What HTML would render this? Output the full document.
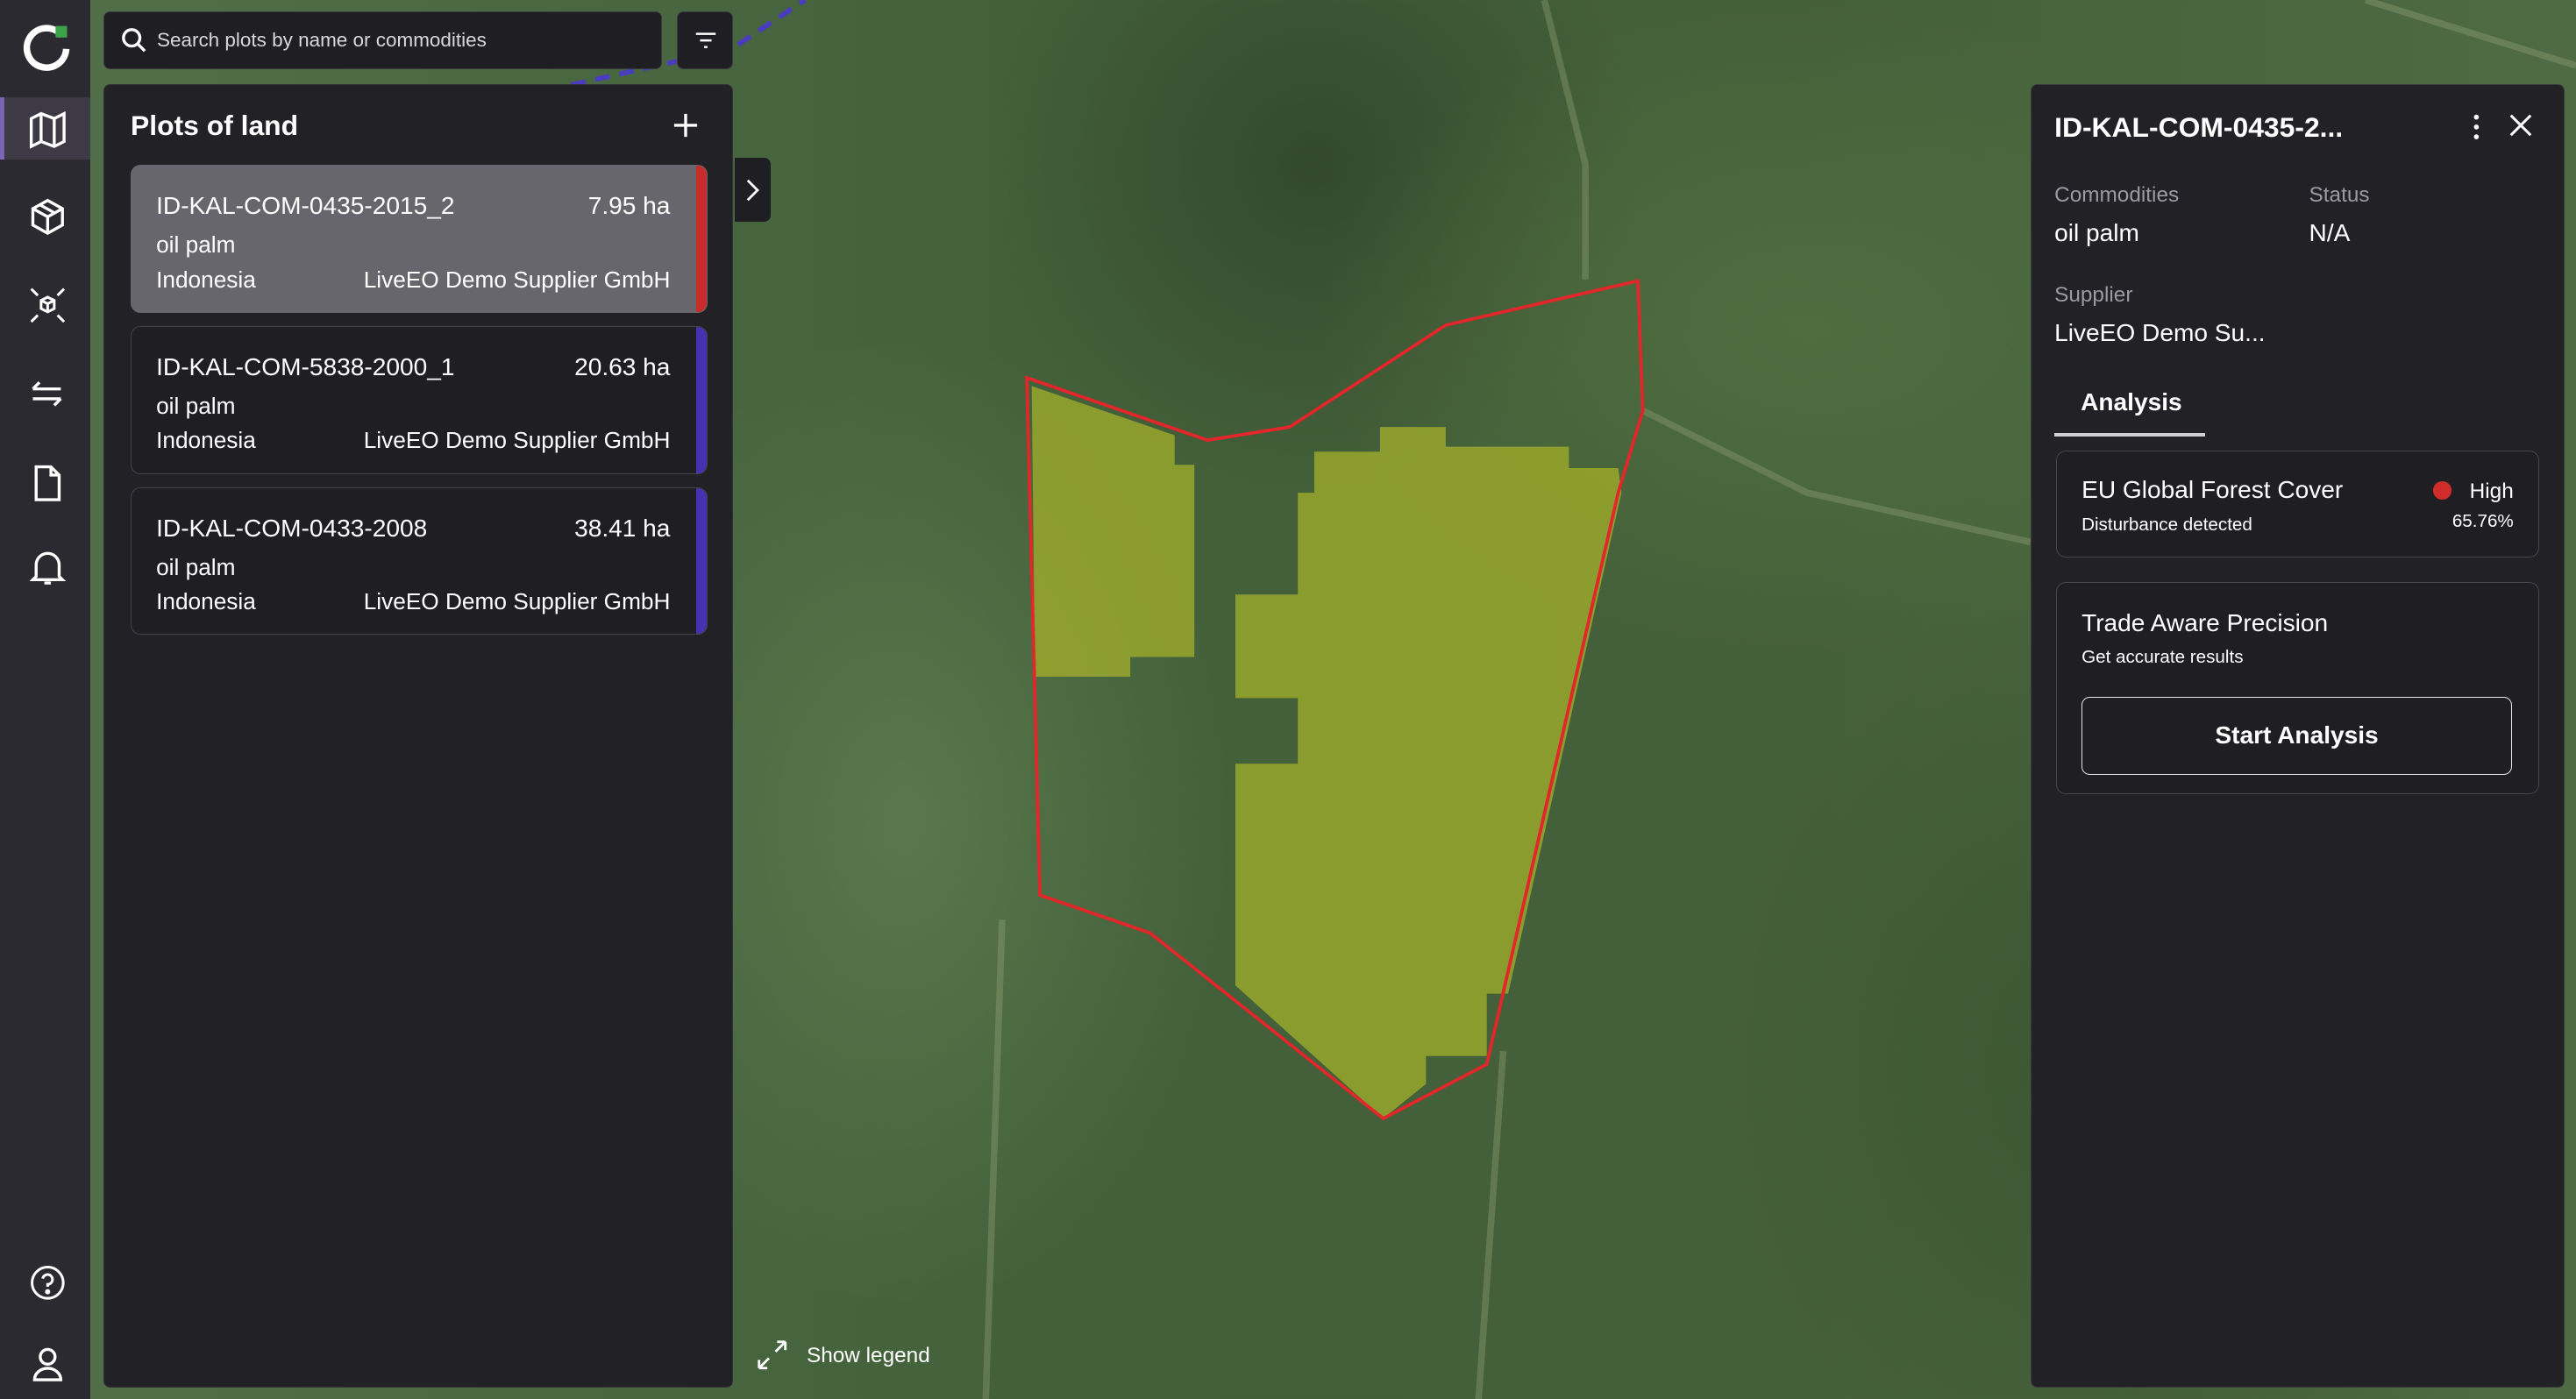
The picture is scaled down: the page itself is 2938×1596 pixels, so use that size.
<!DOCTYPE html>
<html><head><meta charset="utf-8"><style>
*{box-sizing:border-box;margin:0;padding:0}
html,body{width:2938px;height:1596px;overflow:hidden;background:#3b4f35}
#root{zoom:1.8737;width:1568px;height:852px;position:relative;font-family:"Liberation Sans",sans-serif;color:#fff;overflow:hidden}
.map{position:absolute;inset:0;background:
radial-gradient(ellipse 300px 200px at 1100px 200px,#4f6e3f,transparent),
radial-gradient(ellipse 250px 300px at 1300px 650px,#3a5531,transparent),
radial-gradient(ellipse 200px 300px at 550px 500px,#5a784c,transparent),
radial-gradient(ellipse 200px 200px at 800px 100px,#34492c,transparent),
linear-gradient(90deg,#52704a,#42603a 40%,#44603a 70%,#4e6b44);}
.side{position:absolute;left:0;top:0;width:55px;height:852px;background:#2c2a31}
.side .act{position:absolute;left:0;top:59px;width:55px;height:38px;background:#3d3a45;border-left:3px solid #7b63b5}
.ic{position:absolute;left:16px;width:26px;height:26px}
.search{position:absolute;left:63px;top:7px;width:340px;height:35px;background:#1f1e23;border:1px solid #3a3940;border-radius:4px;font-size:12px;color:#d8d8dc;padding:10px 0 0 32px}
.filter{position:absolute;left:412px;top:7px;width:34px;height:35px;background:#1f1e23;border:1px solid #3a3940;border-radius:4px}
.panel{position:absolute;left:63px;top:51px;width:383px;height:794px;background:#222126;border:1px solid #333238;border-radius:4px}
.panel h2{position:absolute;left:16px;top:15px;font-size:17px;font-weight:bold}
.card{position:absolute;left:16px;width:351px;height:90px;border:1px solid #45444b;border-radius:6px;background:#1f1e23;overflow:hidden;font-size:14px}
.card.sel{background:#68666d;border-color:#68666d}
.card .bar{position:absolute;right:0;top:0;bottom:0;width:6px;background:#4632b0}
.card.sel .bar{background:#c82c2a}
.card .r{position:absolute;left:15px;right:22px;display:flex;justify-content:space-between}
.tog{position:absolute;left:447px;top:96px;width:22px;height:39px;background:#1f1e23;border-radius:0 4px 4px 0}
.rp{position:absolute;left:1236px;top:51px;width:325px;height:794px;background:#222126;border:1px solid #3a3940;border-radius:4px}
.lbl{position:absolute;font-size:13px;color:#9c9aa1}
.val{position:absolute;font-size:15px}
.box{position:absolute;left:15px;width:294px;border:1px solid #47464c;border-radius:6px;background:#1f1e23}
</style></head><body><div id="root">
<div class="map"></div>
<svg style="position:absolute;left:0;top:0" width="1568" height="852">
<path d="M300 95 L310 60 L400 40 L445 30 L490 0" stroke="#4a3cc0" stroke-width="3" fill="none" stroke-dasharray="9 6"/>
<path d="M940 0 L965 100 L965 170 M1000 250 L1100 300 L1236 330 M610 560 L600 852 M915 640 L900 852 M1440 0 L1568 40" stroke="#9aa77e" stroke-width="4" fill="none" opacity=".35"/>
<path d="M628 235 L715 265 L715 283 L727 283 L727 400 L688 400 L688 412 L630 412 Z" fill="#a8b32a" opacity=".72"/>
<path d="M800 275 L840 275 L840 260 L880 260 L880 272 L955 272 L955 285 L985 285 L987 300 L918 605 L905 605 L905 643 L868 643 L868 660 L842 681 L752 600 L752 465 L790 465 L790 425 L752 425 L752 362 L790 362 L790 300 L800 300 Z" fill="#a8b32a" opacity=".72"/>
<path d="M625 230 L735 268 L785 260 L880 198 L997 171 L1000 250 L985 300 L905 648 L842 681 L700 568 L633 545 Z" fill="none" stroke="#e2262a" stroke-width="2"/>
</svg>
<div class="side"><div class="act"></div>
<svg class="ic" style="top:13px;width:32px;height:32px;left:13px" viewBox="0 0 32 32"><path d="M25 9 A12 12 0 1 0 27.5 17" stroke="#fff" stroke-width="4" fill="none"/><rect x="21" y="3" width="7" height="7" fill="#3ca34a"/></svg>
<svg class="ic" style="top:66px" viewBox="0 0 26 26" fill="none" stroke="#fff" stroke-width="1.8"><path d="M3 6 L9 3 L17 6 L23 3 V20 L17 23 L9 20 L3 23 Z M9 3V20 M17 6V23"/></svg>
<svg class="ic" style="top:119px" viewBox="0 0 26 26" fill="none" stroke="#fff" stroke-width="1.8"><path d="M13 3 L22 8 V18 L13 23 L4 18 V8 Z M4 8 L13 13 L22 8 M13 13 V23 M8 5.5 L17 10.5"/></svg>
<svg class="ic" style="top:173px" viewBox="0 0 26 26" fill="none" stroke="#fff" stroke-width="1.6"><path d="M13 8 L17 10 V15 L13 17 L9 15 V10 Z M9 10 L13 12 L17 10 M13 12V17 M3 3 L7 7 M23 3 L19 7 M3 23 L7 19 M23 23 L19 19"/></svg>
<svg class="ic" style="top:227px" viewBox="0 0 26 26" fill="none" stroke="#fff" stroke-width="1.8"><path d="M4 10 H21 M4 10 L8 6 M4 16 H21 M21 16 L17 20"/></svg>
<svg class="ic" style="top:281px" viewBox="0 0 26 26" fill="none" stroke="#fff" stroke-width="1.8"><path d="M6 3 H15 L20 8 V23 H6 Z M15 3 V8 H20"/></svg>
<svg class="ic" style="top:332px" viewBox="0 0 26 26" fill="none" stroke="#fff" stroke-width="1.8"><path d="M6 19 V12 A7 7 0 0 1 20 12 V19 L22 21 H4 Z M11 23 H15"/></svg>
<svg class="ic" style="top:768px" viewBox="0 0 26 26" fill="none" stroke="#fff" stroke-width="1.6"><circle cx="13" cy="13" r="9.5"/><path d="M10 10.5 A3 3 0 1 1 13 14 V15.5"/><circle cx="13" cy="18.5" r=".8" fill="#fff"/></svg>
<svg class="ic" style="top:817px" viewBox="0 0 26 26" fill="none" stroke="#fff" stroke-width="1.8"><circle cx="13" cy="9" r="4.5"/><path d="M5 23 A8 7 0 0 1 21 23 Z"/></svg>
</div>
<div class="search">Search plots by name or commodities
<svg style="position:absolute;left:10px;top:9px" width="16" height="16" viewBox="0 0 16 16" fill="none" stroke="#fff" stroke-width="1.8"><circle cx="6.5" cy="6.5" r="5"/><path d="M10 10 L14.5 14.5"/></svg></div>
<div class="filter"><svg style="position:absolute;left:9px;top:10px" width="16" height="14" viewBox="0 0 16 14" stroke="#fff" stroke-width="1.3"><path d="M2 3H14M4.5 7H11.5M7 11H9"/></svg></div>
<div class="panel"><h2>Plots of land</h2>
<svg style="position:absolute;left:346px;top:17px" width="16" height="16" stroke="#fff" stroke-width="1.8"><path d="M8 1V15M1 8H15"/></svg>
<div class="card sel" style="top:49px"><div class="bar"></div>
<div class="r" style="top:16px;font-size:15px"><span>ID-KAL-COM-0435-2015_2</span><span>7.95 ha</span></div>
<div class="r" style="top:40px"><span>oil palm</span></div>
<div class="r" style="top:61px"><span>Indonesia</span><span>LiveEO Demo Supplier GmbH</span></div></div>
<div class="card" style="top:147px"><div class="bar"></div>
<div class="r" style="top:16px;font-size:15px"><span>ID-KAL-COM-5838-2000_1</span><span>20.63 ha</span></div>
<div class="r" style="top:40px"><span>oil palm</span></div>
<div class="r" style="top:61px"><span>Indonesia</span><span>LiveEO Demo Supplier GmbH</span></div></div>
<div class="card" style="top:245px"><div class="bar"></div>
<div class="r" style="top:16px;font-size:15px"><span>ID-KAL-COM-0433-2008</span><span>38.41 ha</span></div>
<div class="r" style="top:40px"><span>oil palm</span></div>
<div class="r" style="top:61px"><span>Indonesia</span><span>LiveEO Demo Supplier GmbH</span></div></div>
</div>
<div class="tog"><svg style="position:absolute;left:6px;top:12px" width="10" height="16" fill="none" stroke="#fff" stroke-width="1.5"><path d="M2 2L8 8L2 14"/></svg></div>
<svg style="position:absolute;left:460px;top:815px" width="20" height="20" fill="none" stroke="#fff" stroke-width="1.5"><path d="M2 18L8 12M2 18V13M2 18H7M18 2L12 8M18 2V7M18 2H13"/></svg>
<div style="position:absolute;left:491px;top:818px;font-size:13px">Show legend</div>
<div style="position:absolute;left:1478px;top:826px;font-size:14px;color:rgba(255,255,255,.25);font-weight:bold">⊘ mapbox</div>
<div class="rp">
<div style="position:absolute;left:14px;top:16px;font-size:17px;font-weight:bold">ID-KAL-COM-0435-2...</div>
<svg style="position:absolute;left:266px;top:17px" width="10" height="18" fill="#fff"><circle cx="5" cy="3" r="1.5"/><circle cx="5" cy="9" r="1.5"/><circle cx="5" cy="15" r="1.5"/></svg>
<svg style="position:absolute;left:290px;top:17px" width="16" height="16" stroke="#fff" stroke-width="1.6"><path d="M2 2L14 14M14 2L2 14"/></svg>
<div class="lbl" style="left:14px;top:60px">Commodities</div><div class="val" style="left:14px;top:82px">oil palm</div>
<div class="lbl" style="left:169px;top:60px">Status</div><div class="val" style="left:169px;top:82px">N/A</div>
<div class="lbl" style="left:14px;top:121px">Supplier</div><div class="val" style="left:14px;top:143px">LiveEO Demo Su...</div>
<div style="position:absolute;left:30px;top:185px;font-size:15px;font-weight:bold">Analysis</div>
<div style="position:absolute;left:14px;top:212px;width:92px;height:2px;background:#cfcfd4"></div>
<div class="box" style="top:223px;height:65px">
<div style="position:absolute;left:15px;top:15px;font-size:15px">EU Global Forest Cover</div>
<div style="position:absolute;left:15px;top:38px;font-size:11px">Disturbance detected</div>
<div style="position:absolute;left:229px;top:18px;width:11px;height:11px;border-radius:50%;background:#cf2c2a"></div>
<div style="position:absolute;right:15px;top:17px;font-size:13px">High</div>
<div style="position:absolute;right:15px;top:36px;font-size:11px">65.76%</div></div>
<div class="box" style="top:303px;height:129px">
<div style="position:absolute;left:15px;top:16px;font-size:15px">Trade Aware Precision</div>
<div style="position:absolute;left:15px;top:39px;font-size:11px">Get accurate results</div>
<div style="position:absolute;left:15px;top:69px;width:262px;height:48px;border:1px solid #e5e5e8;border-radius:5px;text-align:center;line-height:46px;font-size:15px;font-weight:bold">Start Analysis</div></div>
</div>
</div></body></html>
